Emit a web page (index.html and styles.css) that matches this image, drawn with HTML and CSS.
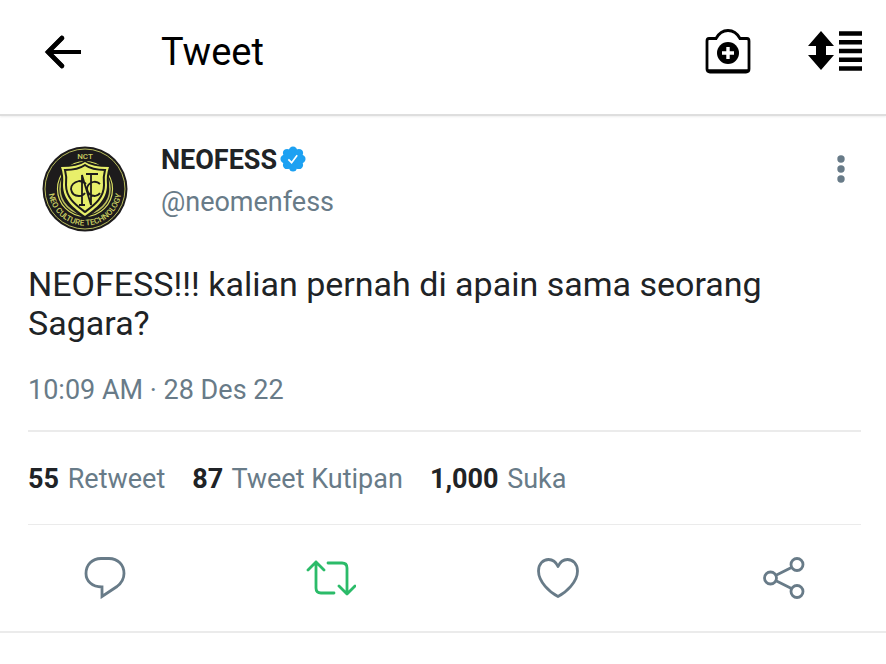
FILE: index.html
```html
<!DOCTYPE html>
<html lang="id">
  <head>
    <meta charset="UTF-8" />
    <meta name="viewport" content="width=device-width, initial-scale=1.0" />
    <title>Tweet</title>
    <link rel="stylesheet" href="styles.css">
  </head>
  <body>
    <header class="top-bar">
      <button class="icon-button" aria-label="Kembali">
        <svg width="40" height="40" viewBox="0 0 40 40" fill="none" stroke="#000" stroke-width="4">
          <path d="M38 20H5M20 5L5 20L20 35" stroke-linejoin="round" />
          <path d="M19 6L5 20L19 34" stroke-width="4.600" stroke-linecap="round" />
        </svg>
      </button>
      <h1>Tweet</h1>
      <button class="icon-button camera" aria-label="Kamera">
        <svg width="46" height="46" viewBox="0 0 46 46">
          <path d="M4 9.500H11C14 4 18 1.500 23 1.500S32 4 35 9.500H42Q44 9.500 44 12V40Q44 43 41 43H5Q2 43 2 40V12Q2 9.500 4 9.500Z" fill="none" stroke="#000" stroke-width="2.800" />
          <path d="M3 42H43" stroke="#000" stroke-width="3.400" />
          <circle cx="23" cy="24" r="11" />
          <path d="M23 18V30M17 24H29" stroke="#fff" stroke-width="3.400" />
        </svg>
      </button>
      <button class="icon-button" aria-label="Urutkan">
        <svg width="54" height="42" viewBox="0 0 54 42">
          <path d="M13 0L26 15H18V24H26L13 39L0 24H8V15H0Z" />
          <path d="M31 2.500H54M31 11.300H54M31 20H54M31 28.800H54M31 37.500H54" stroke="#000" stroke-width="4.400" />
        </svg>
      </button>
    </header>

    <article class="tweet">
      <div class="profile">
        <svg class="avatar" width="86" height="86" viewBox="0 0 86 86" role="img" aria-label="NEOFESS">
          <circle cx="43" cy="43" r="42.500" fill="#1d1b1c" />
          <circle cx="43" cy="43" r="40" fill="none" stroke="#b9bd5c" stroke-width="1" />
          <circle cx="43" cy="43" r="27.500" fill="none" stroke="#d9de62" stroke-width="1.200" />
          <circle cx="43" cy="43" r="25" fill="none" stroke="#b9bd5c" stroke-width="1.600" />
          <path d="M43 14Q36 20 16 19Q20 26 19 39C19 56 31 65 43 73C55 65 67 56 67 39Q66 26 70 19Q50 20 43 14Z" fill="#1d1b1c" />
          <path d="M43 16Q36 21 19 21Q22 29 21 39C21 54 32 62 43 70C54 62 65 54 65 39Q64 29 67 21Q50 21 43 16Z" fill="#e8ef6a" />
          <path d="M43 19Q36 24 23 24Q25 31 24 39C24 52 34 59 43 66C52 59 62 52 62 39Q61 31 63 24Q50 24 43 19Z" fill="#e8ef6a" stroke="#1d1b1c" stroke-width="2" />
          <path d="M40 59V29L49 59V28M44 28H56M37 59H43M44 38Q41 35 37 35Q29 37 29 43Q30 50 37 50Q41 50 43 47M58 38Q55 35 51 36Q45 38 45 43Q46 50 53 50Q57 49 58 47" fill="none" stroke="#1d1b1c" stroke-width="1.800" />
          <defs>
            <path id="ring" d="M6.500 43A36.500 36.500 0 0 0 79.500 43" />
          </defs>
          <text class="crest-top" x="43" y="13">NCT</text>
          <text class="crest-ring"><textPath href="#ring" startOffset="50%">NEO CULTURE TECHNOLOGY</textPath></text>
        </svg>
        <div class="names">
          <div class="name">
            <strong>NEOFESS</strong>
            <svg width="26" height="26" viewBox="0 0 28 28" role="img" aria-label="Terverifikasi">
              <g fill="#1da1f2">
                <circle cx="14" cy="14" r="10" />
                <circle cx="14" cy="5" r="4.500" />
                <circle cx="20.400" cy="7.600" r="4.500" />
                <circle cx="23" cy="14" r="4.500" />
                <circle cx="20.400" cy="20.400" r="4.500" />
                <circle cx="14" cy="23" r="4.500" />
                <circle cx="7.600" cy="20.400" r="4.500" />
                <circle cx="5" cy="14" r="4.500" />
                <circle cx="7.600" cy="7.600" r="4.500" />
              </g>
              <path d="M9 14.500L12.500 18L18.500 10" fill="none" stroke="#fff" stroke-width="1.800" />
            </svg>
          </div>
          <a class="handle" href="#">@neomenfess</a>
        </div>
        <button class="icon-button more" aria-label="Lainnya">
          <svg width="8" height="28" viewBox="0 0 8 28" fill="#687b88">
            <circle cx="4" cy="4" r="3.700" />
            <circle cx="4" cy="14" r="3.700" />
            <circle cx="4" cy="24" r="3.700" />
          </svg>
        </button>
      </div>

      <p class="content">NEOFESS!!! kalian pernah di apain sama seorang Sagara?</p>
      <p class="date">10:09 AM · 28 Des 22</p>

      <div class="stats">
        <span><b>55</b> Retweet</span>
        <span><b>87</b> Tweet Kutipan</span>
        <span><b>1,000</b> Suka</span>
      </div>
    </article>

    <div class="actions">
      <button class="icon-button" aria-label="Balas">
        <svg width="42" height="42" viewBox="0 0 42 42" fill="none" stroke="#687b88" stroke-width="2.800">
          <path d="M17 1.500H25C34 1.500 40 8 40 16.500C40 22 37.500 26 33 29.500L18 39.500V30C8 30 2 24 2 16.500C2 8 8 1.500 17 1.500Z" />
        </svg>
      </button>
      <button class="icon-button" aria-label="Retweet">
        <svg width="50" height="36" viewBox="0 0 50 36" fill="none" stroke="#2bbb69" stroke-width="2.800" stroke-linecap="round" stroke-linejoin="round">
          <path d="M2 10L10 2L18 10M10 2V28Q10 33 15 33H28M22 3H36Q41 3 41 8V33M33 26L41 34L49 26" />
        </svg>
      </button>
      <button class="icon-button" aria-label="Suka">
        <svg width="42" height="40" viewBox="0 0 42 40" fill="none" stroke="#687b88" stroke-width="2.800" stroke-linejoin="round">
          <path d="M21 38.500C13 34.500 1.500 24 1.500 13C1.500 6 6 1.500 11.500 1.500C16 1.500 19 4 21 8.500C23 4 26 1.500 30.500 1.500C36 1.500 40.500 6 40.500 13C40.500 24 29 34.500 21 38.500Z" />
        </svg>
      </button>
      <button class="icon-button" aria-label="Bagikan">
        <svg width="42" height="42" viewBox="0 0 42 42" fill="none" stroke="#687b88" stroke-width="2.800">
          <circle cx="7.500" cy="21" r="6" />
          <circle cx="34" cy="7.500" r="6" />
          <circle cx="34" cy="34.500" r="6" />
          <path d="M13 18.300L28.500 10.500M13 23.700L28.500 31.500" />
        </svg>
      </button>
    </div>
  </body>
</html>
```

FILE: styles.css
```css
* {
  box-sizing: border-box;
  margin: 0;
}
body {
  background: #fff;
  color: #202326;
  font-family: Roboto, sans-serif;
}
.icon-button {
  display: flex;
  justify-content: center;
  padding: 0;
  border: none;
  background: none;
  cursor: pointer;
}
.top-bar {
  display: flex;
  align-items: center;
  height: 116px;
  padding: 0 24px 10px 43px;
  border-bottom: 2px solid #dedede;
  box-shadow: 0 1px 2px #eee;
}
.top-bar h1 {
  margin-left: 78px;
  color: #000;
  font-size: 38px;
  font-weight: 400;
  line-height: 44px;
}
.camera {
  margin-left: auto;
  margin-right: 57px;
}
.tweet {
  padding: 30px 25px 0 28px;
}
.profile {
  display: flex;
  align-items: flex-start;
  padding: 0 16px 0 14px;
}
.crest-top,
.crest-ring {
  fill: #c9ce62;
  font-size: 8px;
  font-weight: 500;
  text-anchor: middle;
}
.names {
  margin-left: 33px;
}
.name {
  display: flex;
  gap: 3px;
  font-size: 27px;
  line-height: 28px;
}
.handle {
  display: block;
  margin-top: 12px;
  color: #687b88;
  font-size: 27px;
  line-height: 32px;
  text-decoration: none;
}
.more {
  margin-top: 9px;
  margin-left: auto;
}
.content {
  margin-top: 33px;
  font-size: 34px;
  line-height: 39px;
}
.date {
  margin-top: 31px;
  color: #687b88;
  font-size: 27px;
  line-height: 32px;
}
.stats {
  display: flex;
  gap: 27px;
  margin-top: 24px;
  padding: 31px 0 29px;
  border-top: 2px solid #ebebeb;
  border-bottom: 1px solid #ebebeb;
  color: #687b88;
  font-size: 27px;
  line-height: 32px;
}
.stats b {
  margin-right: 2px;
  color: #202326;
}
.actions {
  display: flex;
  justify-content: space-between;
  align-items: center;
  height: 108px;
  padding: 0 77px 0 80px;
  border-bottom: 2px solid #ebebeb;
}
.actions .icon-button {
  width: 50px;
}
```
